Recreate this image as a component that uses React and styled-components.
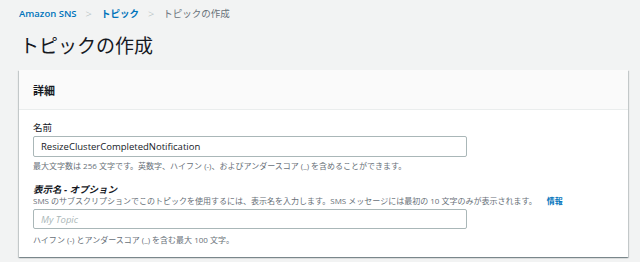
import React from "react";
import styled, { createGlobalStyle } from "styled-components";

const GlobalStyle = createGlobalStyle`
  body {
    margin: 0;
    background: #f2f3f3;
    font-family: "Open Sans", "Noto Sans CJK JP", sans-serif;
    color: #16191f;
  }
`;

const Page = styled.div`
  padding: 6px 12px 0 19px;
  width: 640px;
  height: 262px;
  box-sizing: border-box;
  overflow: hidden;
`;

const Breadcrumbs = styled.nav`
  display: flex;
  align-items: center;
  gap: 9px;
  font-size: 9.5px;
  height: 14px;
`;

const Crumb = styled.span`
  color: ${({ current }) => (current ? "#687078" : "#0073bb")};
  font-weight: ${({ current }) => (current ? 400 : 600)};
`;

const Chevron = styled.span`
  color: #aab7b8;
  font-size: 11px;
  font-weight: 300;
`;

const Title = styled.h1`
  margin: 14px 0 0 1px;
  font-size: 19px;
  font-weight: 400;
  line-height: 24px;
  height: 25px;
`;

const Card = styled.section`
  margin-top: 11px;
  background: #fff;
  box-shadow: 0 1px 1px 0 rgba(0, 28, 36, 0.3), 1px 1px 1px 0 rgba(0, 28, 36, 0.15),
    -1px 1px 1px 0 rgba(0, 28, 36, 0.15);
`;

const CardHeader = styled.header`
  background: #fafafa;
  border-bottom: 1px solid #eaeded;
  padding: 0 14px;
  height: 39px;
  display: flex;
  align-items: center;
  font-size: 11px;
  font-weight: 700;
`;

const CardBody = styled.div`
  padding: 11px 14px 12px;
  display: flex;
  flex-direction: column;
  gap: 13px;
`;

const Field = styled.div`
  display: flex;
  flex-direction: column;
`;

const Label = styled.label`
  font-size: 9.5px;
  line-height: ${({ bold }) => (bold ? "12px" : "13px")};
  font-weight: ${({ bold }) => (bold ? 700 : 400)};
  font-style: ${({ bold }) => (bold ? "italic" : "normal")};
  color: #16191f;
`;

const Description = styled.div`
  font-size: 8px;
  line-height: ${({ tight }) => (tight ? "10px" : "11px")};
  margin-top: ${({ gapTop }) => gapTop || 0}px;
  color: #687078;
  display: flex;
  gap: 10px;
`;

const Info = styled.a`
  color: #0073bb;
  font-weight: 700;
`;

const Input = styled.input`
  box-sizing: border-box;
  margin-top: ${({ gapTop }) => gapTop}px;
  width: 434px;
  height: ${({ tall }) => (tall ? 21 : 20)}px;
  border: 1px solid #aab7b8;
  border-radius: 2px;
  padding: 0 7px;
  font-family: inherit;
  font-size: 9.5px;
  color: #16191f;
  outline: none;

  &::placeholder {
    color: #aab7b8;
    font-style: italic;
  }
`;

export default function App() {
  return (
    <>
      <GlobalStyle />
      <Page>
        <Breadcrumbs>
          <Crumb>Amazon SNS</Crumb>
          <Chevron>&gt;</Chevron>
          <Crumb>トピック</Crumb>
          <Chevron>&gt;</Chevron>
          <Crumb current>トピックの作成</Crumb>
        </Breadcrumbs>
        <Title>トピックの作成</Title>
        <Card>
          <CardHeader>詳細</CardHeader>
          <CardBody>
            <Field>
              <Label>名前</Label>
              <Input tall gapTop={2} defaultValue="ResizeClusterCompletedNotification" />
              <Description gapTop={3}>
                最大文字数は 256 文字です。英数字、ハイフン (-)、およびアンダースコア (_) を含めることができます。
              </Description>
            </Field>
            <Field>
              <Label bold>表示名 - オプション</Label>
              <Description tight>
                <span>
                  SMS のサブスクリプションでこのトピックを使用するには、表示名を入力します。SMS メッセージには最初の 10 文字のみが表示されます。
                </span>
                <Info>情報</Info>
              </Description>
              <Input gapTop={3} placeholder="My Topic" />
              <Description gapTop={5}>ハイフン (-) とアンダースコア (_) を含む最大 100 文字。</Description>
            </Field>
          </CardBody>
        </Card>
      </Page>
    </>
  );
}
